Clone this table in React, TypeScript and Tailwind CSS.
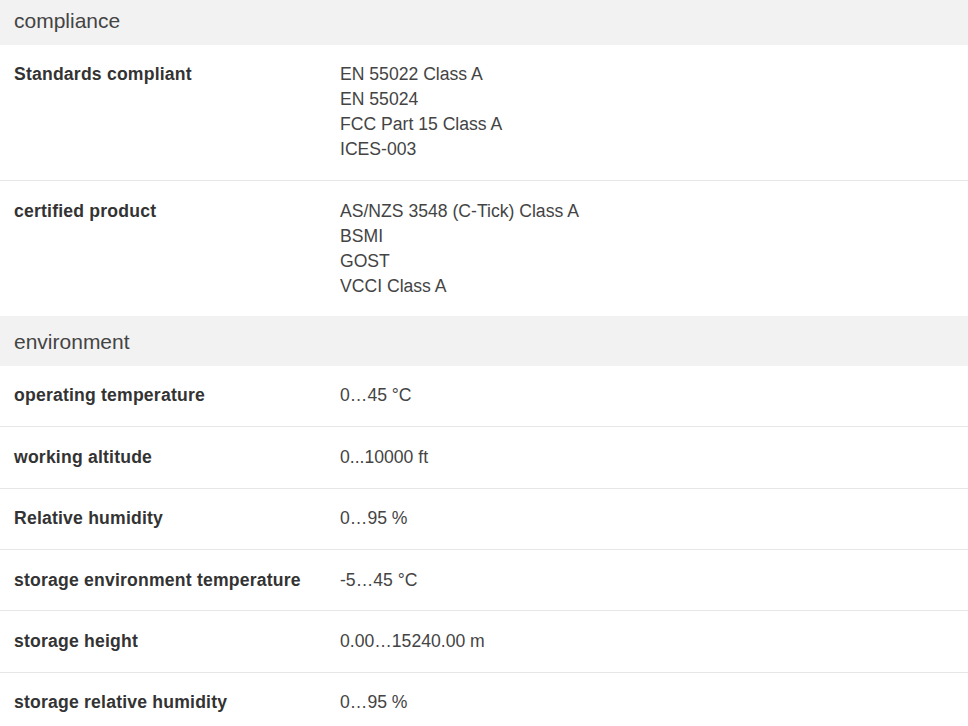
import React from 'react'

interface Row {
  label: string
  values: string[]
}

interface Section {
  title: string
  rows: Row[]
}

const sections: Section[] = [
  {
    title: 'compliance',
    rows: [
      {
        label: 'Standards compliant',
        values: ['EN 55022 Class A', 'EN 55024', 'FCC Part 15 Class A', 'ICES-003'],
      },
      {
        label: 'certified product',
        values: ['AS/NZS 3548 (C-Tick) Class A', 'BSMI', 'GOST', 'VCCI Class A'],
      },
    ],
  },
  {
    title: 'environment',
    rows: [
      { label: 'operating temperature', values: ['0…45 °C'] },
      { label: 'working altitude', values: ['0...10000 ft'] },
      { label: 'Relative humidity', values: ['0…95 %'] },
      { label: 'storage environment temperature', values: ['-5…45 °C'] },
      { label: 'storage height', values: ['0.00…15240.00 m'] },
      { label: 'storage relative humidity', values: ['0…95 %'] },
    ],
  },
]

export default function App() {
  return (
    <div className="h-[726px] overflow-hidden bg-white font-['Liberation_Sans',Arial,sans-serif] text-[#333]">
      <div className="-mt-[5px]">
        {sections.map((section) => (
          <div key={section.title}>
            {/* Section header */}
            <div className="bg-[#f2f2f2] px-[14px] pt-[12.5px] pb-[12px] text-[21px] leading-[25px] text-[#444]">
              {section.title}
            </div>
            {section.rows.map((row, i) => (
              <div
                key={row.label}
                className={`grid grid-cols-[326px_1fr] px-[14px] py-[17.7px] text-[17.6px] leading-[25px] ${
                  i < section.rows.length - 1 ? 'border-b border-[#e6e6e6]' : ''
                }`}
              >
                <div className="font-bold tracking-[0.2px] text-[#333]">{row.label}</div>
                <div className="text-[#444]">
                  {row.values.map((v) => (
                    <div key={v}>{v}</div>
                  ))}
                </div>
              </div>
            ))}
          </div>
        ))}
      </div>
    </div>
  )
}
